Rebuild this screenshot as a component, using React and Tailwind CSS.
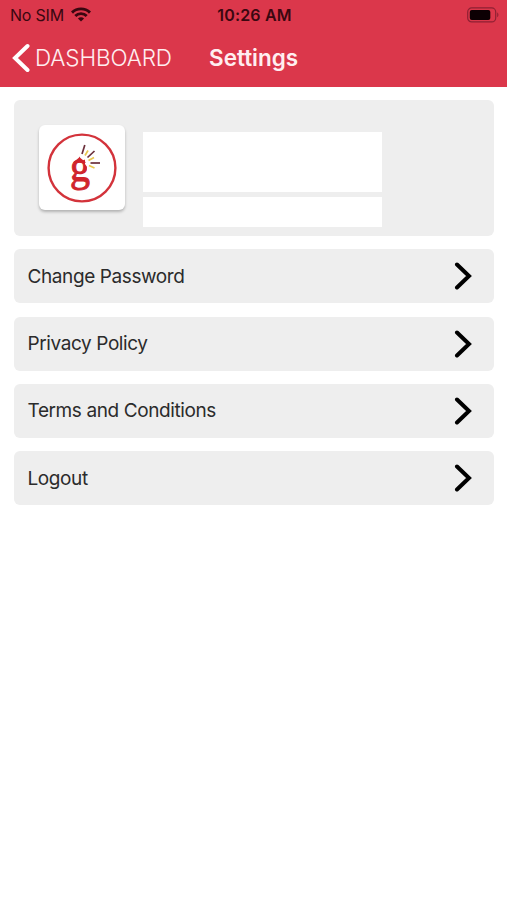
import React from "react";

const menuItems = ["Change Password", "Privacy Policy", "Terms and Conditions", "Logout"];

const WifiIcon = () => (
  <svg width="20" height="15" viewBox="0 0 20 15" fill="none" stroke="#3a0710" strokeWidth="2.9">
    <path d="M1 5.6a12.8 12.8 0 0 1 18 0" />
    <path d="M4.3 9a8.1 8.1 0 0 1 11.4 0" />
    <path d="M10 14.6 6.9 11.5a4.4 4.4 0 0 1 6.2 0Z" fill="#3a0710" stroke="none" />
  </svg>
);

const BatteryIcon = () => (
  <svg width="32" height="16" viewBox="0 0 32 16" fill="none">
    <rect x="0.7" y="0.9" width="28" height="14" rx="4" stroke="#8f2133" strokeWidth="1.2" />
    <rect x="2.8" y="3" width="20.5" height="10" rx="2" fill="#0d0003" />
    <path d="M30.2 5.6c1.6.7 1.6 4 0 4.7Z" fill="#8f2133" />
  </svg>
);

// red ring, a "g" with a flame tip, and sparks on its right
const Logo = () => (
  <svg width="70" height="70" viewBox="0 0 70 70" fill="none">
    <clipPath id="ear">
      <path d="M20 20H38V31L40 34V40H46V62H20Z" />
    </clipPath>
    <circle cx="35" cy="35" r="33.4" stroke="#d3333b" strokeWidth="2.4" />
    <g clipPath="url(#ear)">
      <text
        x="23"
        y="48"
        textLength="20"
        lengthAdjust="spacingAndGlyphs"
        fontFamily="'Liberation Serif', serif"
        fontSize="44"
        stroke="#d0242c"
        strokeWidth="1"
        fill="#d0242c"
      >
        g
      </text>
    </g>
    <path d="M26 30c1-3 5-3 6.500-6.500 1.500 3.500 5.500 3.500 6.500 6.500-4-2.500-9-2.500-13 0Z" fill="#d0242c" />
    <g stroke="#6b2f3a" strokeWidth="1.700">
      <path d="M35 21 37.800 12" />
      <path d="M40.500 24.500 47.500 18" />
      <path d="M43.500 30h9.500" />
    </g>
    <g stroke="#e9c84f" strokeWidth="1.700">
      <path d="M38 22.500 41 17.500" />
      <path d="M41.500 27.500 47 24.500" />
      <path d="M42 32.500 47.500 35" />
    </g>
  </svg>
);

const Header = () => (
  <header className="h-[87px] bg-[#db374b]">
    <div className="grid h-[29px] grid-cols-3 items-center pl-[10px] pr-[8px] text-[#3a0710]">
      <div className="flex items-center gap-[7px]">
        <span className="whitespace-nowrap text-[16px] leading-none tracking-[-0.2px]">No SIM</span>
        <WifiIcon />
      </div>
      <span className="whitespace-nowrap text-center text-[16px] font-semibold leading-none tracking-[0.2px]">10:26 AM</span>
      <div className="flex justify-end">
        <BatteryIcon />
      </div>
    </div>
    <div className="flex h-[58px] items-center pl-[12px] text-[#ffeef0]">
      <button className="flex w-[197px] items-center gap-[5px]">
        <svg width="18" height="30" viewBox="0 0 18 30" fill="none" stroke="#fff" strokeWidth="4" strokeLinecap="round">
          <path d="M15.500 3 3 15l12.500 12" />
        </svg>
        <span className="text-[22.5px] font-light leading-none tracking-[-0.15px]">DASHBOARD</span>
      </button>
      <h1 className="text-[22.5px] font-semibold leading-none">Settings</h1>
    </div>
  </header>
);

const ProfileCard = () => (
  <div className="flex h-[136px] rounded-[6px] bg-[#eeeeee] pl-[25px]">
    <div className="mt-[25px] flex h-[85px] w-[86px] items-center justify-center rounded-[6px] bg-white shadow-[0_2px_3px_rgba(0,0,0,0.25)]">
      <Logo />
    </div>
    <div className="ml-[18px] mt-[32px] flex w-[239px] flex-col gap-[5px]">
      <div className="h-[60px] bg-white" />
      <div className="h-[30px] bg-white" />
    </div>
  </div>
);

const MenuItem = ({ label }) => (
  <button className="flex h-[53.9px] w-full items-center justify-between rounded-[6px] bg-[#eeeeee] pl-[14px] pr-[22px] text-[#2b2b2b]">
    <span className="text-[19px] leading-none tracking-[-0.4px]">{label}</span>
    <svg width="18" height="28" viewBox="0 0 18 28" fill="none" stroke="#000" strokeWidth="4" strokeLinecap="round">
      <path d="M3 2.500 15 14 3 25.500" />
    </svg>
  </button>
);

const App = () => {
  return (
    <div className="min-h-screen bg-white font-['Inter',sans-serif]">
      <Header />
      <main className="flex flex-col gap-[13.4px] px-[13.5px] pt-[13px]">
        <ProfileCard />
        {menuItems.map((label) => (
          <MenuItem key={label} label={label} />
        ))}
      </main>
    </div>
  );
};

export default App;
